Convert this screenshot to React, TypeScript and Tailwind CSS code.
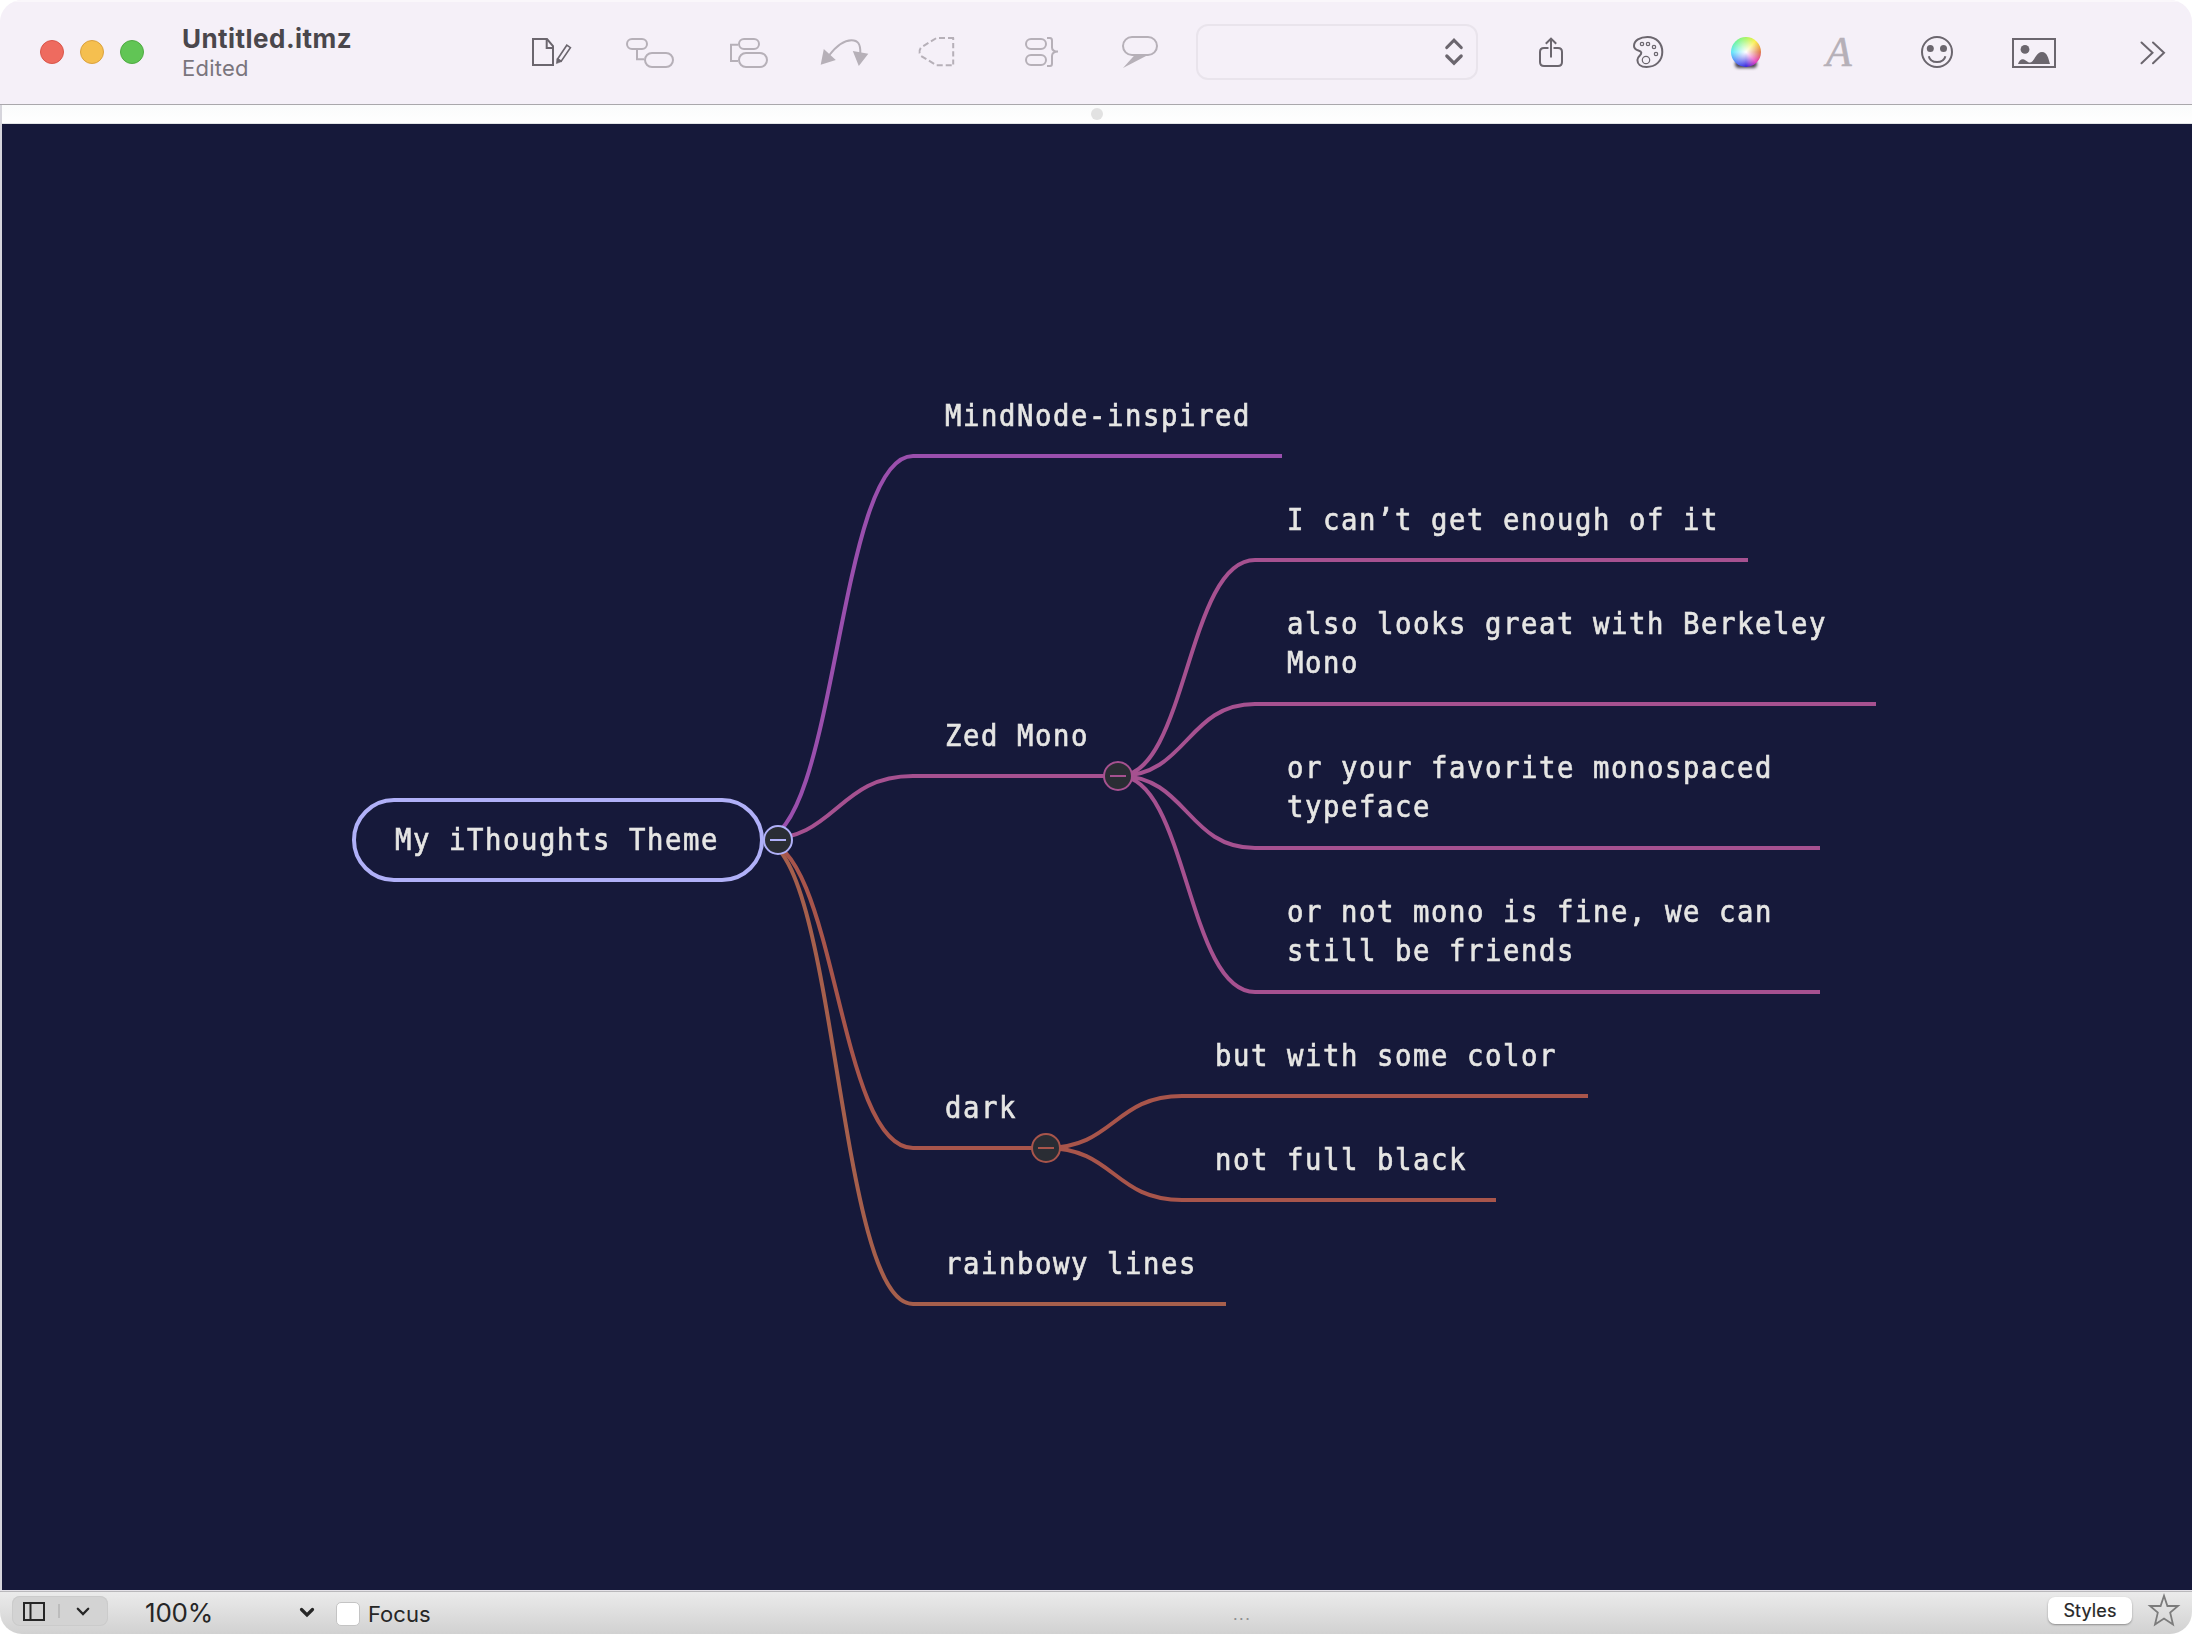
import React from "react";

const DIM = "#b6b0b8";
const INK = "#6b666e";

/* Toolbar glyph: every drawing shares one 104px tall coordinate band. */
function Glyph({ x, w, className = "", children }: { x: number; w: number; className?: string; children: React.ReactNode }) {
  return (
    <svg className={`shrink-0 ${className}`} width={w} height={104} viewBox={`${x} 0 ${w} 104`} fill="none" strokeWidth={2}>
      {children}
    </svg>
  );
}

function Toolbar() {
  return (
    <header className="flex h-[105px] shrink-0 items-start border-b border-[#a9a7ab] bg-[#f5f0f8] shadow-[inset_0_2px_0_#faf7fb]">
      <div className="ml-10 mt-10 flex gap-4">
        <span className="size-6 rounded-full border border-[#d9564a] bg-[#ee6b5f]" />
        <span className="size-6 rounded-full border border-[#dba23f] bg-[#f5bf4f]" />
        <span className="size-6 rounded-full border border-[#50ab43] bg-[#61c555]" />
      </div>
      <div className="ml-[38px] mt-[23px] w-[348px] whitespace-nowrap font-[Inter,sans-serif]">
        <div className="text-[26px] font-bold leading-8 tracking-[0.45px] text-[#4a474c]">Untitled.itmz</div>
        <div className="text-[22px] leading-[26px] tracking-[0.25px] text-[#7a757d]">Edited</div>
      </div>

      <Glyph x={530} w={44}>
        <g stroke={INK}>
          <path d="M533 39H547L553 46V65H533Z" />
          <path d="M546.7 39V48H553" />
          <path d="M557.6 59L566.8 45.2L570.4 47.6L561.2 61.2Z" strokeWidth={1.6} />
          <path d="M557 58.5L561.6 61.5L556.4 63.6Z" fill={INK} strokeWidth={0.6} />
        </g>
      </Glyph>
      <Glyph x={624} w={52} className="ml-[50px]">
        <g stroke={DIM}>
          <rect x="627" y="39" width="20" height="10" rx="5" />
          <rect x="645" y="53" width="28" height="14" rx="7" />
          <path d="M637 50V59.2H644" />
        </g>
      </Glyph>
      <Glyph x={728} w={42} className="ml-[52px]">
        <g stroke={DIM}>
          <rect x="739" y="39" width="20" height="10" rx="5" />
          <rect x="739" y="53" width="28" height="14" rx="7" />
          <path d="M738 44.8H731V61H738" />
        </g>
      </Glyph>
      <Glyph x={818} w={54} className="ml-12">
        <path d="M829 55.5C837 45 845 40.2 851.5 40.2C858 40.2 860.6 44 860.3 53" stroke={DIM} />
        <path d="M820.7 64.7L823.8 49L835.8 60Z M852.8 51L868.3 53.8L858.8 66Z" fill={DIM} />
      </Glyph>
      <Glyph x={916} w={40} className="ml-11">
        <path d="M953.2 37.8V65.2" stroke={DIM} strokeDasharray="5.2 3" strokeDashoffset="3" />
        <path d="M954 38H936.5L921 47.5Q917.8 51.7 921 56L936.5 65.2H954" stroke={DIM} strokeDasharray="6 3" />
      </Glyph>
      <Glyph x={1023} w={37} className="ml-[67px]">
        <g stroke={DIM}>
          <rect x="1026" y="39" width="20" height="10" rx="5" />
          <rect x="1026" y="55" width="20" height="10" rx="5" />
          <path d="M1047 38H1050Q1052 38 1052 40.5V47.5Q1052 51.6 1058 51.6Q1052 51.8 1052 56V63.5Q1052 66 1050 66H1047" />
        </g>
      </Glyph>
      <Glyph x={1120} w={40} className="ml-[60px]">
        <rect x="1123" y="37" width="34" height="18" rx="9" stroke={DIM} />
        <path d="M1134.7 55L1123 68L1147 55.5Z" fill={DIM} />
      </Glyph>

      <div className="ml-9 mt-6 flex h-14 w-[282px] shrink-0 items-center justify-end rounded-xl border-2 border-[#e9e4ec] pr-3">
        <svg width="20" height="30" viewBox="0 0 20 30" fill="none" stroke={INK} strokeWidth="3.2">
          <path d="M2.8 10.5L10 3.2L17.2 10.5 M2.8 19L10 26.2L17.2 19" strokeLinecap="round" />
        </svg>
      </div>

      <Glyph x={1537} w={28} className="ml-[59px]">
        <path d="M1548.5 48H1544Q1540 48 1540 52V62Q1540 66 1544 66H1558Q1562 66 1562 62V52Q1562 48 1558 48H1553.5" stroke={INK} />
        <path d="M1551 57.5V39 M1545.8 43.8L1551 38.6L1556.2 43.8" stroke={INK} />
      </Glyph>
      <Glyph x={1631} w={34} className="ml-[66px]">
        <g stroke={INK}>
          <path d="M1647.5 37C1656.5 37 1662.3 43.5 1662.3 52C1662.3 61 1655.5 67 1646.5 67C1640.5 67 1637.4 63.8 1637.4 60C1637.4 56 1641.6 55.5 1641.3 52.6C1641 49.8 1634 51.3 1634 46C1634 40.5 1640 37 1647.5 37Z" />
          <g strokeWidth="1.2">
            <circle cx="1642" cy="44" r="1.7" />
            <circle cx="1648" cy="44" r="1.7" />
            <circle cx="1654" cy="47" r="1.7" />
            <circle cx="1656" cy="54" r="1.7" />
            <circle cx="1646" cy="60" r="3.7" />
          </g>
        </g>
      </Glyph>
      <div className="relative ml-[66px] mt-[37px] size-[30px] shrink-0">
        <span className="absolute -bottom-px left-1 h-2 w-[22px] rounded-full bg-[#4a4450] blur-[1.5px]" />
        <span className="absolute inset-0 rounded-full bg-[radial-gradient(circle,#fff_0%,rgba(255,255,255,.6)_28%,rgba(255,255,255,0)_68%),conic-gradient(#a8f562,#fbf04a_40deg,#e07a4a_90deg,#e53ec0_135deg,#3a2ae0_180deg,#5a74f5_220deg,#5fe6fb_270deg,#6ff5a0_315deg,#a8f562)]" />
      </div>
      <div className="ml-[65px] mt-[28px] w-[29px] shrink-0 font-['Liberation_Serif',serif] text-[42px] italic leading-[48px] text-[#b6b0b8] [-webkit-text-stroke:0.6px_#b6b0b8]">A</div>
      <Glyph x={1919} w={36} className="ml-16">
        <circle cx="1937" cy="52" r="15" stroke={INK} />
        <circle cx="1930.3" cy="48.4" r="3.5" fill={INK} />
        <circle cx="1943.5" cy="48.4" r="3.5" fill={INK} />
        <path d="M1928.8 56.3C1930.5 64 1943.5 64 1945.4 56.3" stroke={INK} />
      </Glyph>
      <Glyph x={2010} w={48} className="ml-[55px]">
        <rect x="2013" y="39" width="42" height="28" stroke={INK} />
        <circle cx="2025" cy="49.4" r="4.4" fill={INK} />
        <path d="M2018 64C2019 60.5 2021 59 2023 59.2C2026 59.6 2027 62.5 2030 62.5C2034.5 62.5 2035.5 52 2042 52C2047.5 52 2048.5 59 2050 64Z" fill={INK} />
      </Glyph>
      <Glyph x={2138} w={30} className="ml-20">
        <path d="M2141.5 42.5L2152.5 52.8L2141.5 63.3 M2153 42.5L2164 52.8L2153 63.3" stroke={INK} strokeLinecap="round" />
      </Glyph>
    </header>
  );
}

const PURPLE = "#9a4fad";
const PINK = "#a65190";
const RED = "#a8554b";
const ORANGE = "#a65f4c";

/* from x, from y, bend end x, target y, line end x, colour */
const BRANCHES: [number, number, number, number, number, string][] = [
  [761, 840, 913, 1304, 1226, ORANGE],
  [761, 840, 913, 1148, 1046, RED],
  [761, 840, 913, 776, 1118, PINK],
  [761, 840, 913, 456, 1282, PURPLE],
  [1119, 776, 1255, 560, 1748, PINK],
  [1119, 776, 1255, 704, 1876, PINK],
  [1119, 776, 1255, 848, 1820, PINK],
  [1119, 776, 1255, 992, 1820, PINK],
  [1046, 1148, 1182, 1096, 1588, RED],
  [1046, 1148, 1182, 1200, 1496, RED],
];

/* cell left, first baseline, lines */
const LABELS: [number, number, string[]][] = [
  [393, 850, ["My iThoughts Theme"]],
  [943, 426, ["MindNode-inspired"]],
  [943, 746, ["Zed Mono"]],
  [943, 1118, ["dark"]],
  [943, 1274, ["rainbowy lines"]],
  [1285, 530, ["I can’t get enough of it"]],
  [1285, 634, ["also looks great with Berkeley", "Mono"]],
  [1285, 778, ["or your favorite monospaced", "typeface"]],
  [1285, 922, ["or not mono is fine, we can", "still be friends"]],
  [1213, 1066, ["but with some color"]],
  [1213, 1170, ["not full black"]],
];

const TOGGLES: [number, number, string][] = [
  [778, 840, "#b0b0f8"],
  [1118, 776, PINK],
  [1046, 1148, RED],
];

const TOP = 124;

function MindMap() {
  return (
    <main className="relative h-[1466px] shrink-0 overflow-hidden bg-[#16193a]">
      <svg className="absolute inset-0" width="2190" height="1466" viewBox="2 124 2190 1466" fill="none" strokeWidth="4">
        {BRANCHES.map(([x, y, bx, ty, ex, c], i) => (
          <path key={i} stroke={c} d={`M${x} ${y}C${(x + bx) / 2} ${y} ${(x + bx) / 2} ${ty} ${bx} ${ty}H${ex}`} />
        ))}
      </svg>
      <div className="absolute left-[350px] top-[674px] h-[84px] w-[412px] rounded-full border-4 border-[#b0b0f8] bg-[#16193a]" />
      {TOGGLES.map(([x, y, c]) => (
        <span
          key={x}
          className="absolute flex size-[30px] items-center justify-center rounded-full border-2 bg-[#2a2d34]"
          style={{ left: x - 17, top: y - 15 - TOP, borderColor: c }}
        >
          <span className="h-0.5 w-4" style={{ backgroundColor: c }} />
        </span>
      ))}
      {LABELS.map(([x, y, lines]) => (
        <div
          key={lines[0]}
          className="absolute origin-left scale-x-[0.88] whitespace-nowrap font-['DejaVu_Sans_Mono',monospace] text-[31px] leading-[39px] tracking-[1.79px] text-[#e6e6e4] [-webkit-text-stroke:0.7px_#e6e6e4]"
          style={{ left: x - 0.3, top: y - 30 - TOP }}
        >
          {lines.map((l) => (
            <div key={l}>{l}</div>
          ))}
        </div>
      ))}
    </main>
  );
}

function StatusBar() {
  return (
    <footer className="flex h-11 shrink-0 items-start border-t border-[#e4e2e8] bg-[linear-gradient(#b9b8bb_0,#b9b8bb_1px,#ebebeb_1px,#d1d1d1)] font-[Inter,sans-serif] text-[#262626]">
      <div className="ml-3 mt-[5px] flex h-[30px] w-24 shrink-0 items-center rounded-lg bg-[#d3d3d3] shadow-[inset_0_0_0_1px_#cbcbcb]">
        <svg width="96" height="30" viewBox="0 0 96 30" fill="none" stroke="#262626" strokeWidth="2">
          <path d="M12 7H32V24H12Z M18.5 7V24" />
          <path d="M47 8V22" stroke="#bcbcbc" />
          <path d="M65.8 12.8L71 18L76.2 12.8" strokeWidth="2.3" strokeLinecap="round" />
        </svg>
      </div>
      <span className="ml-9 w-[155px] whitespace-nowrap pl-px text-[26px] leading-[44px] tracking-[-0.2px]">100%</span>
      <svg className="mt-4 shrink-0" width="16" height="12" viewBox="0 0 16 12" fill="none" stroke="#262626" strokeWidth="3.2">
        <path d="M2.5 2.5L8 8L13.5 2.5" strokeLinecap="round" />
      </svg>
      <span className="ml-[21px] mt-[11px] size-6 shrink-0 rounded-[5px] border border-[#c4c4c4] bg-white" />
      <span className="ml-2 w-[864px] text-[22px] leading-[46px]">Focus</span>
      <span className="w-[816px] pl-px text-[16px] leading-[47px] tracking-[1.5px] text-[#8f8f8f]">...</span>
      <button className="mt-1.5 h-[27px] w-[84px] shrink-0 rounded-[7px] bg-white text-center text-[18px] leading-[25px] tracking-[0.15px] shadow-[0_1px_2px_rgba(0,0,0,.35)] [-webkit-text-stroke:0.2px_#262626]">
        Styles
      </button>
      <svg className="ml-3.5 mt-px shrink-0" width="36" height="36" viewBox="0 0 36 36" fill="none" stroke="#7c7c7c" strokeWidth="1.8">
        <path d="M18 3.8L21.4 14H32L24.2 20.6L27 32.6L18 26.6L9 32.6L11.8 20.6L4 14H14.6Z" />
      </svg>
    </footer>
  );
}

export default function App() {
  return (
    <div className="h-[1634px] w-[2192px] bg-white">
      <div className="flex h-full flex-col overflow-hidden rounded-[22px]">
        <Toolbar />
        <div className="flex h-[1485px] shrink-0 flex-col border-l-2 border-[#d6d5dc]">
          <div className="flex h-[19px] shrink-0 items-center justify-center border-b border-[#e3e5e6] bg-gradient-to-b from-[#fafbfb] to-white">
            <span className="size-3 rounded-full bg-[#e2e2e2]" />
          </div>
          <MindMap />
        </div>
        <StatusBar />
      </div>
    </div>
  );
}
